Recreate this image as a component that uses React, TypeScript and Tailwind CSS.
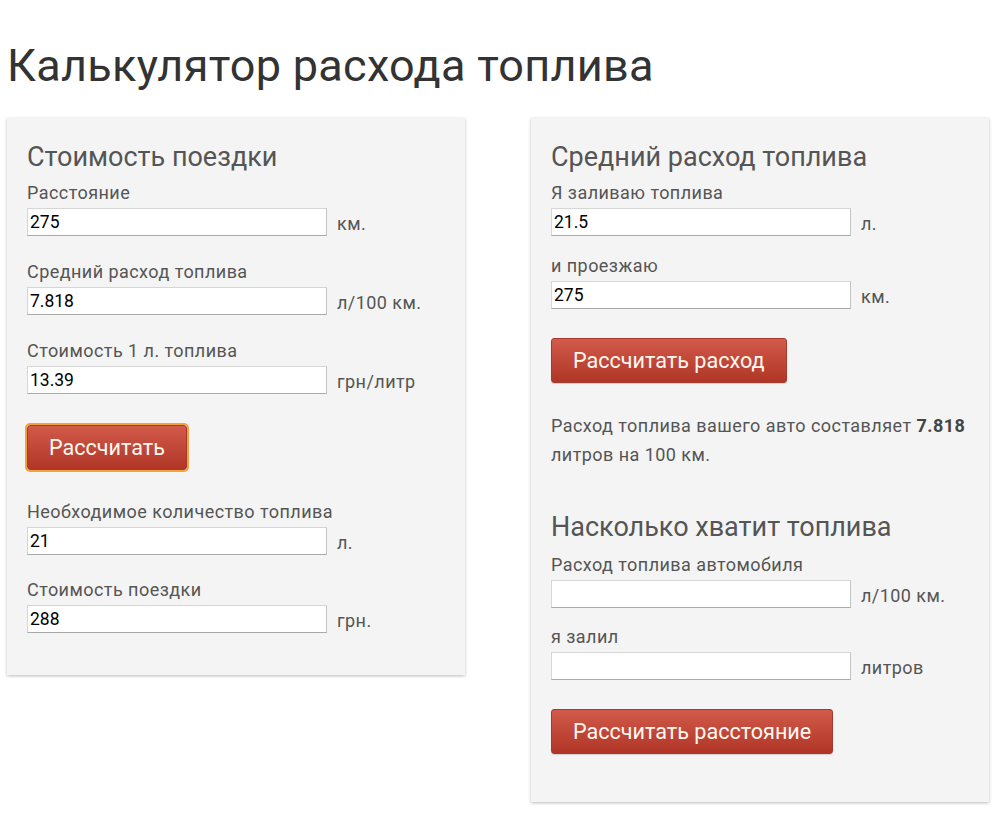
import React from "react";

type FieldProps = {
  label: string;
  value?: string;
  unit: string;
  className?: string;
};

function Field({ label, value = "", unit, className = "" }: FieldProps) {
  return (
    <div className={className}>
      <div className="h-[20px] text-[18px] leading-[20px] tracking-[0.45px] text-[#555]">{label}</div>
      <div className="mt-[5px] flex h-[28px] items-center">
        <input
          type="text"
          defaultValue={value}
          className="w-[300px] h-[28px] bg-white border border-[#d6d6d6] border-b-[#a9a9a9] border-r-[#c4c4c4] px-[2px] text-[17.5px] leading-[20px] text-black outline-none"
        />
        <span className="ml-[10px] pt-[3px] text-[18px] leading-[20px] tracking-[0.45px] text-[#555]">{unit}</span>
      </div>
    </div>
  );
}

function RedButton({ children, focused = false, className = "" }: { children: React.ReactNode; focused?: boolean; className?: string }) {
  return (
    <button
      type="button"
      className={`block h-[45px] px-[21px] rounded-[3px] border border-[#a83a2c] bg-gradient-to-b from-[#d25a4a] to-[#b03526] text-[21.6px] leading-[24px] text-[#fff8f0] shadow-[0_1px_1px_rgba(0,0,0,0.15)] ${focused ? "outline-2 outline-[#f2a23c]" : ""} ${className}`}
    >
      {children}
    </button>
  );
}

export default function App() {
  return (
    <div className="min-h-[823px] bg-white font-['Roboto','Liberation_Sans',sans-serif] pl-[7px]">
      <h1 className="pt-[38px] h-[94px] text-[45px] leading-[56px] text-[#333] tracking-[0.3px]">Калькулятор расхода топлива</h1>

      <div className="mt-[24px] flex items-start gap-[66px]">
        {/* Left card */}
        <div className="w-[458px] bg-[#f4f4f4] shadow-[0_1px_3px_rgba(0,0,0,0.28)] px-[20px] pt-[24px] pb-[42px]">
          <h2 className="h-[30px] text-[27px] leading-[30px] text-[#555]">Стоимость поездки</h2>
          <Field className="mt-[11px]" label="Расстояние" value="275" unit="км." />
          <Field className="mt-[26px]" label="Средний расход топлива" value="7.818" unit="л/100 км." />
          <Field className="mt-[26px]" label="Стоимость 1 л. топлива" value="13.39" unit="грн/литр" />
          <RedButton focused className="mt-[31px]">Рассчитать</RedButton>
          <Field className="mt-[32px]" label="Необходимое количество топлива" value="21" unit="л." />
          <Field className="mt-[25px]" label="Стоимость поездки" value="288" unit="грн." />
        </div>

        {/* Right card */}
        <div className="w-[458px] bg-[#f4f4f4] shadow-[0_1px_3px_rgba(0,0,0,0.28)] px-[20px] pt-[24px] pb-[48px]">
          <h2 className="h-[30px] text-[27px] leading-[30px] text-[#555]">Средний расход топлива</h2>
          <Field className="mt-[11px]" label="Я заливаю топлива" value="21.5" unit="л." />
          <Field className="mt-[20px]" label="и проезжаю" value="275" unit="км." />
          <RedButton className="mt-[29px]">Рассчитать расход</RedButton>
          <p className="mt-[28px] text-[18px] leading-[29px] tracking-[0.45px] text-[#555]">
            Расход топлива вашего авто составляет <b className="font-bold text-[#444]">7.818</b> литров на 100 км.
          </p>
          <h2 className="mt-[43px] h-[30px] text-[27px] leading-[30px] text-[#555]">Насколько хватит топлива</h2>
          <Field className="mt-[13px]" label="Расход топлива автомобиля" unit="л/100 км." />
          <Field className="mt-[19px]" label="я залил" unit="литров" />
          <RedButton className="mt-[29px]">Рассчитать расстояние</RedButton>
        </div>
      </div>
    </div>
  );
}
